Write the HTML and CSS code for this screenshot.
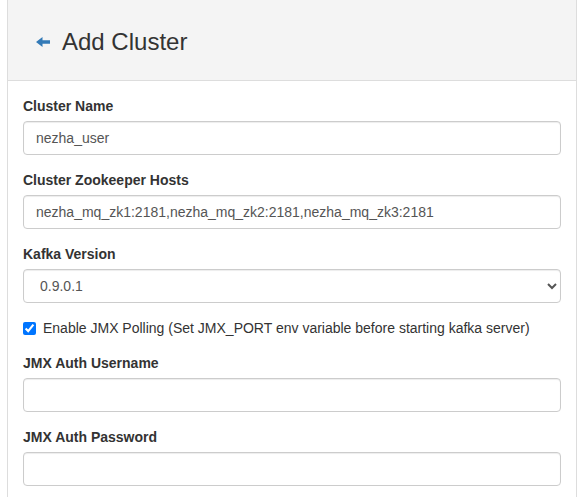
FILE: index.html
```html
<!DOCTYPE html>
<html>
<head>
<meta charset="utf-8">
<link rel="stylesheet" href="styles.css">
</head>
<body>
<div class="page">
  <div class="panel">
    <div class="panel-heading">
      <h3 class="panel-title">
        <a class="back" href="#"><svg width="14" height="10" viewBox="0 0 14 10"><path d="M0 5 L6.5 0 V3.3 H14 V6.7 H6.5 V10 Z" fill="#337ab7"/></svg></a>
        <span>Add Cluster</span>
      </h3>
    </div>
    <div class="panel-body">
      <div class="form-group">
        <label class="control-label">Cluster Name</label>
        <input class="form-control" type="text" value="nezha_user">
      </div>
      <div class="form-group">
        <label class="control-label">Cluster Zookeeper Hosts</label>
        <input class="form-control" type="text" value="nezha_mq_zk1:2181,nezha_mq_zk2:2181,nezha_mq_zk3:2181">
      </div>
      <div class="form-group">
        <label class="control-label">Kafka Version</label>
        <select class="form-control">
          <option>0.9.0.1</option>
        </select>
      </div>
      <div class="checkbox">
        <label><input type="checkbox" checked> Enable JMX Polling (Set JMX_PORT env variable before starting kafka server)</label>
      </div>
      <div class="form-group">
        <label class="control-label">JMX Auth Username</label>
        <input class="form-control" type="text" value="">
      </div>
      <div class="form-group">
        <label class="control-label">JMX Auth Password</label>
        <input class="form-control" type="text" value="">
      </div>
    </div>
  </div>
</div>
</body>
</html>
```

FILE: styles.css
```css
* { box-sizing: border-box; }
html, body {
  margin: 0;
  padding: 0;
  background: #fff;
  font-family: "Liberation Sans", Arial, sans-serif;
  font-size: 14px;
  line-height: 20px;
  color: #333;
  overflow: hidden;
}
.page {
  padding-left: 7px;
}
.panel {
  width: 570px;
  border: 1px solid #ddd;
  border-top: 0;
  background: #fff;
  height: 520px;
}
.panel-heading {
  background: #f4f4f4;
  border-bottom: 1px solid #ddd;
  padding: 29px 15px 25px 28px;
}
.panel-title {
  margin: 0;
  font-size: 24px;
  font-weight: 500;
  line-height: 26px;
  color: #333;
  display: flex;
  align-items: center;
}
.back {
  display: flex;
  width: 14px;
  margin-right: 12px;
}
.panel-body {
  padding: 15px;
}
.form-group {
  margin-bottom: 15px;
}
.control-label {
  display: block;
  font-weight: bold;
  margin-bottom: 5px;
}
.form-control {
  display: block;
  width: 100%;
  height: 34px;
  padding: 6px 12px;
  font-family: "Liberation Sans", Arial, sans-serif;
  font-size: 14px;
  line-height: 20px;
  color: #555;
  background: #fff;
  border: 1px solid #ccc;
  border-radius: 4px;
  box-shadow: inset 0 1px 1px rgba(0,0,0,.075);
  margin: 0;
}
.checkbox {
  margin: 0 0 15px;
  min-height: 20px;
}
.checkbox label {
  display: block;
  position: relative;
  padding-left: 20px;
  font-weight: normal;
}
.checkbox input {
  position: absolute;
  left: 0;
  top: 0;
  margin: 4px 0 0;
  width: 13px;
  height: 13px;
}
```
